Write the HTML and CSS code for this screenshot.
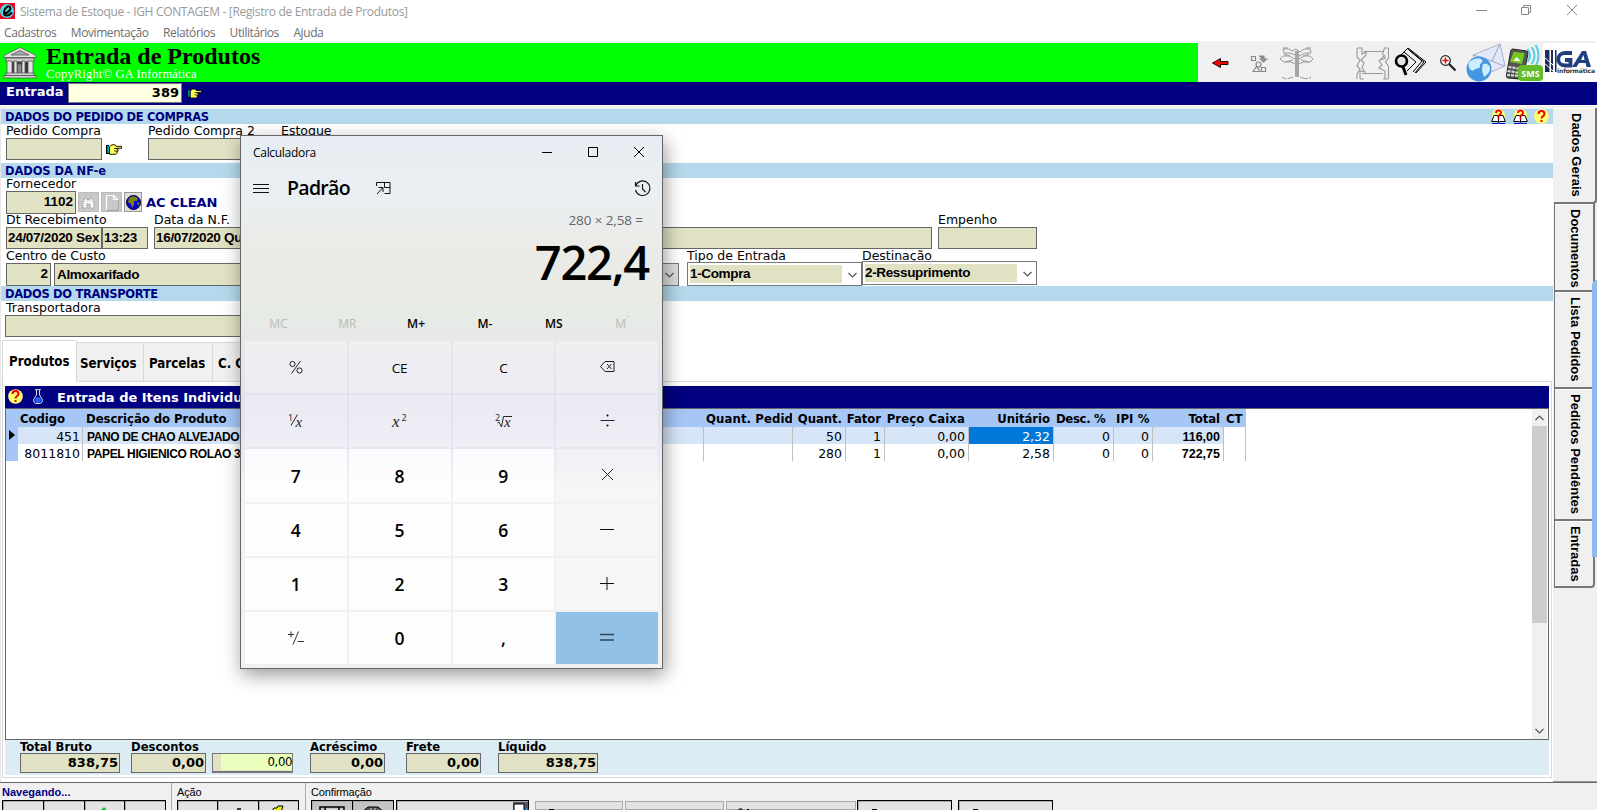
FILE: index.html
```html
<!DOCTYPE html>
<html lang="pt-BR">
<head>
<meta charset="utf-8">
<title>Sistema de Estoque</title>
<link rel="stylesheet" href="styles.css">
</head>
<body>
<svg class="defs" width="0" height="0">
  <symbol id="hand" viewBox="0 0 16 11"><path d="M0 1h3v9H0z"/><path d="M1.500 2h1.200v7H1.500z" fill="#0ff"/><path d="M3.500 2.500L6 .8h3l1 1.500h5.500v2H11v1h1v2h-1v2l-1 1H3.500z" fill="#ff5" stroke="#000" stroke-width=".9"/><path d="M8 4.500h3M8 7h3" stroke="#000" stroke-width=".8"/></symbol>
  <symbol id="book" viewBox="0 0 15 15"><circle cx="7.500" cy="6.500" r="6.500" fill="#ffff70"/><path d="M.700 12.500L3 6.500h3l1.500 1 1.500-1h3l2.300 6H9l-1.500 1-1.500-1z" fill="#fff" stroke="#000"/><path d="M7.500 7v6" stroke="#000"/><path d="M1 14h5.500l1 .5 1-.5H14v1H1z" fill="#00c"/><path d="M5 4c0-3.500 5-3.500 5 0 0 1.800-2.500 1.800-2.500 3.500M7.500 8.500v1.800" fill="none" stroke="#f00" stroke-width="1.900"/></symbol>
  <symbol id="help" viewBox="0 0 15 15"><circle cx="7.500" cy="7.500" r="7.300" fill="#ffff70"/><path d="M4.500 5c0-4 6-4 6 0 0 2-3 2-3 4.500M7.500 11v2" fill="none" stroke="#e00" stroke-width="2"/></symbol>
  <symbol id="chev" viewBox="0 0 9 6"><path d="M.5 1l4 4 4-4" fill="none" stroke="#555" stroke-width="1.200"/></symbol>
</svg>

<header class="titlebar">
  <svg class="appicon" width="15" height="16" viewBox="0 0 15 16"><path d="M0 0h15v16H0z" fill="#f00020"/><circle cx="7" cy="8" r="7" fill="#48d8e0"/><path d="M3 10.500c5 0 8.500-4 7-6.500C8.500 2 4 5 4 9.500c0 4 4.500 4 8 0" fill="none" stroke="#000" stroke-width="2"/></svg>
  <span class="apptitle">Sistema de Estoque - IGH CONTAGEM - [Registro de Entrada de Produtos]</span>
  <svg class="winctl" width="110" height="14" viewBox="0 0 110 14" fill="none" stroke="#888"><path d="M1 7.500h11M46.500 4.500h7v7h-7zM48.500 4V2.500h7v7H54M92 2l10 10M102 2L92 12"/></svg>
</header>
<nav class="menu"><span>Cadastros</span><span>Movimentação</span><span>Relatórios</span><span>Utilitários</span><span>Ajuda</span></nav>

<div class="banner">
  <div class="green">
    <svg width="34" height="33" viewBox="0 0 34 33" stroke="#555" stroke-width=".8"><path d="M1 9.500L17 1.500l16 8v2H1z" fill="#e4e4e4"/><path d="M8 9l9-4.500L26 9z" fill="#aaa"/><path d="M3 12h28v4H3z" fill="#ccc"/><path d="M6 16h22v12H6z" fill="#333"/><path d="M4 15h5v13H4zM11 15h3v13h-3zM19 15h3v13h-3zM25 15h5v13h-5z" fill="#e4e4e4"/><path d="M14.500 18h4v10h-4z" fill="#888"/><path d="M3 27h28v2.500H3zM1 29.500h32V32H1z" fill="#d4d4d4"/></svg>
    <div class="heading"><b>Entrada de Produtos</b><span>CopyRight© GA Informática</span></div>
  </div>
  <svg class="tools" width="399" height="39" viewBox="0 0 399 39" fill="none">
    <path d="M14.500 20l8-4.500v3h7.500v3h-7.500v3z" fill="#f00" stroke="#000" stroke-width=".9"/>
    <g stroke="#888" stroke-width="1.200"><path d="M53.500 13.500h4v4h-4zM63.500 24.500h4v4h-4zM55 28.500l3.500-5 3.500 5z"/><circle cx="60.500" cy="21.500" r="2.500"/><path d="M61 13h5v5M62.500 16l3 3 3-3z" fill="#888"/></g>
    <path d="M97 8h4v26h-4z" fill="#a4a4a4"/><g stroke="#999" stroke-width="1"><path d="M97 12l-5-2h-6l-1-4h6l3 2 4-2 4 3 4-3h6l1 4h-6l-6 3M97 16l-6-3h-6l-3 3 4 3h7l4 2M101 16l5-3h6l3 3-3 3h-7l-4 2M86 11l6 2M87 19l8-2M111 11l-6 2M111 19l-8-2M85 5h5M108 5h5"/><path d="M84 34c2 2 6 2 8 1M95 34l-3 1M105 35c3 1 6 1 8-1M102 34l3 1" stroke-dasharray="5 1"/></g>
    <g stroke="#999" stroke-width="1.100"><path d="M159 5h5v6l4-2v3l-5 5 3 3-2 5 3 4-5-1v8M159 5v9l3 3-3 6 3 3-3 5v5M166 8.500h19M190.500 5v10l-3 4 3 4v13M190.500 5h-4l-2 6 3 4-5 2M187 12l-6 6 3 4-3 3 6 3v8M164 30.500h21M162 36h4M185 36h5"/></g>
    <g stroke="#000" stroke-width="1"><path d="M202 13l8-8 18 14-10 11M206 9l12 10-9 9M211 7l13 11-9 11M210 6l16 13-9 11" /><circle cx="203.500" cy="18" r="5.500" fill="#e4e4e4" stroke-width="2.600"/><path d="M205 24l3 8" stroke-width="3"/></g>
    <circle cx="247.500" cy="17.500" r="4.800" fill="#fff" stroke="#222" stroke-width="1.200"/><path d="M244.500 17.500h6M247.500 14.500v6" stroke="#e00" stroke-width="1.500"/><path d="M251 21l6.500 6.500" stroke="#222" stroke-width="2.300"/>
    <path d="M275 12l27-11 5 22-21 9z" fill="#e3e8f8" stroke="#aab0d0"/><path d="M275 12l19 6 8-17M294 18l12 5" stroke="#9ca4c8"/>
    <circle cx="281" cy="26" r="12.500" fill="#4596e0"/><path d="M271 19c5-4 11-5 13-2s-3 3-2 6-6 2-7 5c-4-1-5-5-4-9zM285 21c5-1 7 2 7 5s-3 6-6 8c-1-4-3-6-1-13z" fill="#cdeeff"/>
    <g transform="translate(-9.500 0)"><path d="M324 6l14 2q2 0 1.500 3l-5 23q-.5 2-3 2l-12-1q-2 0-1.500-3l4-23q.5-3 2-3z" fill="#555" stroke="#222"/><path d="M325 9l11 1-2.500 11-12-2z" fill="#75c820"/><path d="M325 18l3-4 4 4z" fill="#fff"/><path d="M320 24l13 2M319 28l13 2M318.500 32l13 1" stroke="#ddd" stroke-width="2" stroke-dasharray="3 1"/>
    <path d="M339 6c3 4 3 9 0 13M343 4c4 5 4 12 0 17M347 2c4 6 4 15 0 21" stroke="#58cfe0" stroke-width="2"/>
    <rect x="329.500" y="22" width="25" height="16" rx="4" fill="#63bd2b"/><text x="342" y="33.500" text-anchor="middle" class="sms">SMS</text></g>
    <g transform="translate(-10 0)"><path d="M355 0h54v39h-54z" fill="#fff"/><path d="M357 7h4.500v22H357zM363 7h2v22h-2zM367 7h1.500v22H367z" fill="#1d2d5c"/><path d="M356 14l9 8M356 20l9 8" stroke="#fff"/>
    <path d="M384 10h-7c-9 0-9 12.500 0 12.500h5.500V17H377" stroke="#213f7e" stroke-width="3.800"/><path d="M384 24l10-16h4l5 16h-4.500l-1-4H391l-2.500 4zM393 17h3.500l-1-5z" fill="#213f7e" fill-rule="evenodd"/><text x="369" y="30" class="inf" textLength="38">informática</text></g>
  </svg>
</div>
<div class="entry"><b>Entrada</b><span class="num">389</span><svg width="15" height="11"><use href="#hand"/></svg></div>

<div class="main">
<main class="form">
  <div class="bar"><span>DADOS DO PEDIDO DE COMPRAS</span><i><svg width="15" height="15"><use href="#book"/></svg><svg width="15" height="15"><use href="#book"/></svg><svg width="15" height="15"><use href="#help"/></svg></i></div>
  <div class="row r1 labels"><span>Pedido Compra</span><span></span><span>Pedido Compra 2</span><span>Estoque</span></div>
  <div class="row r1"><span class="f"></span><svg class="hand" width="16" height="11"><use href="#hand"/></svg><span class="f"></span><span class="f"></span></div>
  <div class="bar b2"><span class="nf">DADOS DA NF-e</span></div>
  <div class="row labels h13"><span>Fornecedor</span></div>
  <div class="row r2"><span class="f right">1102</span>
    <span class="ib"><svg width="13" height="12" viewBox="0 0 13 12"><path d="M1 12V7l2-5h2v2h3V2h2l2 5v5H8V8H5v4z" fill="#f4f4f4" stroke="#888" stroke-dasharray="1 1"/></svg></span>
    <span class="ib"><svg width="12" height="15" viewBox="0 0 12 15"><path d="M.5.500h7l4 4v10H.500zM7.500.500v4h4" fill="none" stroke="#fff" stroke-width="1.200"/><path d="M1 15h11V5" fill="none" stroke="#888"/></svg></span>
    <span class="ib on"><svg width="15" height="15" viewBox="0 0 15 15"><circle cx="7.500" cy="7.500" r="7" fill="#0000e0" stroke="#003"/><path d="M3 3l4-2 5 2-1 3H8v4l-2 3-1-4-3-2zM11 7l3 1-2 3z" fill="#808000"/></svg></span>
    <b class="sup">AC CLEAN</b></div>
  <div class="row r3 labels"><span>Dt Recebimento</span><span></span><span>Data da N.F.</span><span>Empenho</span></div>
  <div class="row r3"><span class="f tight">24/07/2020 Sex</span><span class="f tight">13:23</span><span class="f tight">16/07/2020 Qui</span><span class="f"></span></div>
  <div class="row r4 labels"><span class="ccusto">Centro de Custo</span><span></span><span></span><span></span><span>Tipo de Entrada</span><span>Destinação</span></div>
  <div class="row r4"><span class="f right">2</span><span class="f mid">Almoxarifado</span><span class="f cap"></span><span class="dd"><svg width="9" height="6"><use href="#chev"/></svg></span><span class="combo"><b>1-Compra</b><svg width="9" height="6"><use href="#chev"/></svg></span><span class="combo up"><b>2-Ressuprimento</b><svg width="9" height="6"><use href="#chev"/></svg></span></div>
  <div class="bar b3"><span>DADOS DO TRANSPORTE</span></div>
  <div class="row labels"><span>Transportadora</span></div>
  <div class="row r5"><span class="f"></span></div>

  <div class="tabs"><b class="sel">Produtos</b><b>Serviços</b><b>Parcelas</b><b class="cc">C. Custo</b></div>
  <section class="panel">
    <div class="gridtitle"><svg width="15" height="15"><use href="#help"/></svg><svg class="flask" width="10" height="15" viewBox="0 0 10 15"><path d="M2 .700h6M3.500 1v5L.800 10v3l2 1.500h4.400l2-1.500v-3L6.500 6V1" fill="none" stroke="#ddd"/><circle cx="5" cy="11" r="3" fill="#2060ff"/></svg><b>Entrada de Itens Individuais</b></div>
    <div class="gridbox">
      <div class="table">
        <div class="tr th"><span></span><span>Codigo</span><span>Descrição do Produto</span><span>Quant. Pedid</span><span>Quant.</span><span>Fator</span><span>Preço Caixa</span><span>Unitário</span><span>Desc. %</span><span>IPI %</span><span>Total</span><span>CT</span></div>
        <div class="tr cur"><span class="ind"><svg width="6" height="10"><path d="M0 0l6 5-6 5z"/></svg></span><span>451</span><span class="ds">PANO DE CHAO ALVEJADO</span><span></span><span>50</span><span>1</span><span>0,00</span><span class="hit">2,32</span><span>0</span><span>0</span><b>116,00</b><span></span></div>
        <div class="tr"><span class="ind"></span><span>8011810</span><span class="ds">PAPEL HIGIENICO ROLAO 300M</span><span></span><span>280</span><span>1</span><span>0,00</span><span>2,58</span><span>0</span><span>0</span><b>722,75</b><span></span></div>
      </div>
      <div class="scroll"><svg class="flip" width="9" height="6"><use href="#chev"/></svg><div class="thumb"></div><svg width="9" height="6"><use href="#chev"/></svg></div>
    </div>
    <div class="totals">
      <div class="t100"><b>Total Bruto</b><span class="f">838,75</span></div>
      <div class="t75"><b>Descontos</b><span class="f">0,00</span></div>
      <div class="disc"><span>0,00</span></div>
      <div class="t75"><b>Acréscimo</b><span class="f">0,00</span></div>
      <div class="t75"><b>Frete</b><span class="f">0,00</span></div>
      <div class="t100"><b>Líquido</b><span class="f">838,75</span></div>
    </div>
  </section>
</main>
<aside class="side">
  <div class="s1">Dados Gerais</div><div class="s2">Documentos</div><div class="s3">Lista Pedidos</div><div class="s4">Pedidos Pendêntes</div><div class="s5">Entradas</div>
  <div class="strip"></div>
</aside>
</div>

<footer class="foot">
  <div class="grp g1"><b>Navegando...</b><p class="btns"><i></i><i></i><i><svg width="8" height="4"><path d="M1 4l3-3 2 2v1z" fill="#0c2"/></svg></i><i></i></p></div>
  <div class="grp g2"><span>Ação</span><p class="btns"><i></i><i><svg width="6" height="3"><path d="M2 3h4" stroke="#000" stroke-width="1.500"/></svg></i><i><svg width="16" height="6"><path d="M1 6l3-4h3l1-2h5l-2 6z" fill="#ee0" stroke="#000"/></svg></i></p></div>
  <div class="grp g3"><span>Confirmação</span><p class="btns dark"><i><svg width="26" height="6"><path d="M1 6V1h24v5M6 1v5M20 1v5" fill="none" stroke="#000" stroke-width="1.500"/><path d="M8 3h11v3H8z" fill="#ddd"/></svg></i><i><svg width="22" height="6"><path d="M0 6l6-5h10l6 5z" fill="#555" stroke="#000"/><path d="M9 2v4M13 2v4" stroke="#ccc"/></svg></i></p></div>
  <p class="btns b4"><i><svg width="15" height="9"><path d="M0 0h15v9H0z" fill="#556"/><path d="M1 2h10v7H1z" fill="#fff" stroke="#000"/><path d="M13 6h1v3h-1z" fill="#39f"/></svg></i></p>
  <p class="plain p1"><i></i></p><p class="plain p2"></p><p class="plain p3"><svg width="14" height="3"><path d="M1 3V1h3v2M8 3l2-2 2 2" fill="none" stroke="#000"/></svg></p>
  <p class="btns b5"><i><svg width="6" height="2"><path d="M0 0h5v1.500H0z"/></svg></i></p><p class="btns b6"><i><svg width="6" height="2"><path d="M0 0h5v1.500H0z"/></svg></i></p>
</footer>

<section class="calc">
  <div class="ctitle"><span>Calculadora</span><svg width="104" height="12" viewBox="0 0 104 12" fill="none" stroke="#000"><path d="M1 6.500h10M47.500 1.500h9v9h-9zM93 1l10 10M103 1L93 11"/></svg></div>
  <div class="chead">
    <svg width="16" height="11" viewBox="0 0 16 11"><path d="M0 1.500h16M0 5.500h16M0 9.500h16" stroke="#111"/></svg>
    <b>Padrão</b>
    <svg width="15" height="13" viewBox="0 0 15 13" fill="none" stroke="#111"><path d="M.500 4V.500h13.500v11H8.500M8.500.500v5H14M1 12l5.500-6M2.500 5.500H7V10"/></svg>
    <svg class="hist" width="17" height="17" viewBox="0 0 17 17" fill="none" stroke="#111" stroke-width="1.100"><path d="M1.500 2v4h4M1.800 5.500A7.300 7.300 0 1 1 1.500 10M8.500 4v5l3 3"/></svg>
  </div>
  <div class="expr">280 × 2,58 =</div>
  <div class="result">722,4</div>
  <div class="mem"><span class="off">MC</span><span class="off">MR</span><span>M+</span><span>M-</span><span>MS</span><span class="off">M<sup>ˇ</sup></span></div>
  <div class="keys">
    <span class="fn"><svg width="14" height="14" viewBox="0 0 14 14" fill="none" stroke="#222"><circle cx="3.500" cy="4" r="2.600"/><circle cx="10.500" cy="10.500" r="2.600"/><path d="M11.500 1l-9 12.500"/></svg></span><span class="fn dn">CE</span><span class="fn dn">C</span><span class="fn"><svg width="15" height="11" viewBox="0 0 15 11" fill="none" stroke="#222"><path d="M5 .500h9v10H5l-4.500-5zM7 3l4.500 5M11.500 3L7 8"/></svg></span>
    <span class="fn"><svg width="15" height="14" viewBox="0 0 15 14"><text x="0" y="6.500" class="rt">1</text><path d="M9.500.500L3 11.500" stroke="#222"/><text x="7.500" y="12.500" class="rx">x</text></svg></span><span class="fn"><svg width="15" height="14" viewBox="0 0 15 14"><text x="0" y="12.500" class="rx big">x</text><text x="9.500" y="6.500" class="rt">2</text></svg></span><span class="fn"><svg width="17" height="14" viewBox="0 0 17 14"><path d="M2.500 9l1.500-1 2.500 5L8.500 2.500H17" fill="none" stroke="#222"/><text x="0" y="6.500" class="rt">2</text><text x="9" y="12.500" class="rx">x</text></svg></span><span class="fn"><svg width="15" height="13" viewBox="0 0 15 13"><path d="M.500 6.500h14" stroke="#222"/><circle cx="7.500" cy="1.500" r="1"/><circle cx="7.500" cy="11.500" r="1"/></svg></span>
    <span>7</span><span>8</span><span>9</span><span class="op"><svg width="13" height="13" viewBox="0 0 13 13"><path d="M1 1l11 11M12 1L1 12" stroke="#222"/></svg></span>
    <span>4</span><span>5</span><span>6</span><span class="op"><svg width="14" height="3"><path d="M0 1.500h14" stroke="#111"/></svg></span>
    <span>1</span><span>2</span><span>3</span><span class="op"><svg width="14" height="15"><path d="M0 7.500h14M7 1v13" stroke="#111"/></svg></span>
    <span><svg width="16" height="14" viewBox="0 0 16 14" fill="none" stroke="#333"><path d="M0 3.500h6M3 .500v6M10.500.500L5 13.500M9.500 10.500H16"/></svg></span><span>0</span><span>,</span><span class="eq"><svg width="14" height="9"><path d="M0 1.500h14M0 7h14" stroke="#345" stroke-width="1.600"/></svg></span>
  </div>
</section>
</body>
</html>
```

FILE: styles.css
```css
* { box-sizing: border-box; }
body { margin: 0; width: 1597px; height: 810px; overflow: hidden; position: relative; background: #f0f0f0; color: #000; font: 13px/14px "DejaVu Sans", sans-serif; }
svg { display: block; flex: none; overflow: visible; }
.defs { position: absolute; }
p { margin: 0; }
span, b { white-space: nowrap; }

.titlebar { height: 23px; background: #fff; display: flex; align-items: flex-start; font: 12px/23px "Open Sans", sans-serif; color: #999; }
.appicon { margin-top: 3px; }
.apptitle { margin-left: 5px; letter-spacing: -.32px; }
.winctl { margin: 3px 12px 0 auto; }
.menu { height: 18px; background: #fff; display: flex; gap: 14.500px; padding-left: 4px; font: 12px/19px "Open Sans", sans-serif; letter-spacing: -.42px; color: #6d6d6d; }

.banner { height: 41px; padding-top: 2px; display: flex; }
.green { width: 1198px; background: #0f0; display: flex; padding: 3px 0 0 3px; }
.heading { margin-left: 9px; display: flex; flex-direction: column; font-family: "Liberation Serif", serif; }
.heading b { font-size: 24px; line-height: 21px; letter-spacing: 0; }
.heading span { color: #fff; font-size: 12.500px; line-height: 14px; letter-spacing: .18px; }
.tools { overflow: hidden; }
.sms { font: bold 9px "Open Sans", sans-serif; fill: #fff; }
.inf { font: bold 6px "DejaVu Sans", sans-serif; fill: #333; }

.entry { height: 23px; background: #000080; display: flex; align-items: flex-start; }
.entry b { color: #fff; font-size: 13px; line-height: 20px; margin-left: 6px; width: 62px; }
.num { width: 114px; height: 20px; margin-top: 1px; border: 1px solid #777; background: #ffffe1; text-align: right; font-weight: bold; line-height: 17px; padding-right: 2px; }
.entry svg { margin: 6px 0 0 5px; }

.main { height: 678px; display: flex; border-top: 1px solid #fff; border-bottom: 1px solid #666; box-shadow: inset 0 -1px #999; }
.form { width: 1553px; background: #fff; border-left: 1px solid #e8e8e8; border-top: 3px solid #f0f0f0; display: flex; flex-direction: column; height: 676px; }
.bar { height: 15px; flex: none; background: #b5d9ec; color: #000080; font-weight: bold; font-size: 11.500px; line-height: 16px; letter-spacing: -.33px; padding-left: 4px; display: flex; }
.nf { letter-spacing: -.1px; }
.bar i { margin-left: auto; display: flex; gap: 6.500px; padding-right: 4px; }
.b2 { margin-top: 3px; } .b3 { margin-top: 1px; }
.row { display: grid; height: 22px; flex: none; padding-left: 5px; }
.labels { height: 14px; font-size: 12.500px; line-height: 13px; }
.ccusto { letter-spacing: -.1px; }
.h13 { height: 13px; line-height: 12px; }
.f { border: 1px solid #666; background: #e1e1c4; font: bold 13.500px/20px "Liberation Sans", sans-serif; letter-spacing: -.35px; padding: 0 2px; overflow: hidden; }
.right { text-align: right; padding-right: 2px; letter-spacing: 0; line-height: 19px; }
.r1 { grid-template-columns: 96px 46px 133px 107px; }
.r1 > .f:nth-child(3) { width: 126px; }
.hand { margin: 6px 0 0 4px; }
.r2 { grid-template-columns: 70px 21px 21px 18px auto; column-gap: 2px; justify-content: start; }
.r2 .f { margin-right: 1px; width: 70px; }
.ib { background: #c8c8c8; margin: 1px 0; height: 20px; display: flex; align-items: center; justify-content: center; border: 1px solid #bbb; }
.ib.on { background: #ddd; border-color: #999; }
.sup { color: #000080; font-size: 13px; line-height: 23px; margin-left: 2px; letter-spacing: -.05px; }
.r3 { grid-template-columns: 96px 52px 784px 99px; }
.r3 > .f:nth-child(2) { width: 46px; }
.r3 > .f:nth-child(3) { width: 778px; }
.tight { padding: 0 1px; font-size: 13.500px; line-height: 19px; letter-spacing: -.3px; }
.r4 { grid-template-columns: 48px 300px 306px 27px 175px 175px; }
.r4 > .f:first-child { width: 45px; }
.r4 > .mid { width: 290px; line-height: 21px; }
.dd { width: 19px; border: 1px solid #777; background: #ddd; display: flex; align-items: center; justify-content: center; }
.combo { border: 1px solid #777; background: #fff; height: 24px; margin-top: -1px; padding: 2px 10px 2px 2px; display: flex; justify-content: space-between; align-items: center; }
.combo.up { margin-top: -2px; width: 175px; }
.combo b { width: 152px; height: 18px; background: #e1e1c4; font: bold 13.500px/17px "Liberation Sans", sans-serif; letter-spacing: -.35px; }
.combo svg { margin: 2px -6px 0 0; }
.r5 { padding-left: 4px; grid-template-columns: 500px; }

.tabs { height: 42px; flex: none; margin-top: 3px; padding-left: 1px; display: flex; align-items: flex-end; box-shadow: inset 0 -1px #d9d9d9; font: bold 13.200px/14px "DejaVu Sans Condensed", "DejaVu Sans", sans-serif; }
.tabs b { height: 40px; background: #f0f0f0; border: 1px solid #d9d9d9; border-left: 0; width: 69px; padding: 14px 0 0 5px; }
.tabs b:nth-child(2) { width: 67px; padding-left: 3px; }
.tabs .sel { height: 42px; width: 75px; background: #fff; border-left: 1px solid #d9d9d9; border-bottom: 0; padding: 14px 0 0 6px; }
.tabs .cc { width: 90px; }
.panel { width: 1550px; margin-left: 1px; border: 1px solid #d9d9d9; border-top: 0; padding: 4px 2px 2px; height: 396px; background: #fff; display: flex; flex-direction: column; }
.gridtitle { height: 22px; flex: none; background: #000080; color: #fff; display: flex; padding: 3px 0 0 3px; font-size: 13px; line-height: 17px; }
.flask { margin: 0 14px 0 10px; width: 10px; }
.gridbox { height: 332px; flex: none; border: 1px solid #666; display: flex; justify-content: space-between; }
.table { width: 1240px; }
.tr { display: grid; grid-template-columns: 12px 65px 621px 89px 53px 39px 84px 85px 60px 39px 71px 22px; height: 17px; line-height: 20px; font-size: 12.500px; text-align: right; }
.tr > * { border-right: 1px solid #c0c0c0; padding-right: 3px; overflow: hidden; }
.tr > :first-child { border: 0; background: #a6c6f5; padding: 3px 0 0 3px; }
.tr > :nth-child(3) { text-align: left; padding-left: 3px; }
.tr > :nth-child(2) { padding-right: 2px; }
.tr > b { font: bold 12.500px/20px "Liberation Sans", sans-serif; }
.tr > .ds { font: bold 12px/20px "Liberation Sans", sans-serif; letter-spacing: -.36px; padding-left: 4px; }
.th { height: 18px; background: #a6c6f5; font: bold 13px/20px "DejaVu Sans Condensed", "DejaVu Sans", sans-serif; letter-spacing: -.05px; }
.th > * { border-right-color: transparent; }
.th > :nth-child(2), .th > :nth-child(4), .th > :nth-child(9), .th > :nth-child(10), .th > :nth-child(12) { text-align: left; padding: 0 0 0 2px; }
.th > :nth-child(9) { letter-spacing: -.35px; }
.th > :nth-child(4), .th > :nth-child(7), .th > :nth-child(10) { letter-spacing: .1px; }
.cur { background: linear-gradient(90deg, #d6e5f8 1218px, #fff 1218px); }
.cur .hit { background: #0078d7; color: #fff; }
.scroll { width: 15px; margin-right: 1px; background: #f0f0f0; display: flex; flex-direction: column; align-items: center; padding: 6px 0 5px; }
.flip { transform: scaleY(-1); }
.thumb { width: 15px; height: 197px; background: #cdcdcd; margin: 5px 0 auto; }
.totals { height: 35px; flex: none; background: #dcecf5; display: flex; padding: 0 0 0 15px; font: bold 12.900px/13px "DejaVu Sans Condensed", "DejaVu Sans", sans-serif; }
.totals > div { display: flex; flex-direction: column; }
.totals .f { height: 20px; font: bold 13px/18px "DejaVu Sans", sans-serif; letter-spacing: 0; text-align: right; padding-right: 1px; }
.totals b { height: 13px; overflow: visible; line-height: 14px; }
.t100 { width: 100px; } .t75 { width: 75px; margin-left: 21px; }
.totals > .t75:nth-child(2) { margin-left: 11px; } .totals > .t75:nth-child(4) { margin-left: 17px; } .totals > .t100:last-child { margin-left: 17px; }
.totals .disc { width: 81px; height: 20px; margin: 13px 0 0 6px; border: 1px solid #777; border-bottom-width: 2px; background: #e1e1c4; padding-left: 8px; }
.disc span { background: #eaffbe; text-align: right; font: 13px/16px "DejaVu Sans Condensed", sans-serif; letter-spacing: -.4px; }

.side { width: 44px; position: relative; display: flex; flex-direction: column; align-items: flex-start; padding: 2px 0 0 1px; font: bold 13px/14px "Liberation Sans", sans-serif; letter-spacing: 0; }
.side > div:not(.strip) { writing-mode: vertical-rl; width: 41px; padding: 5px 0 0; line-height: 36px; border: 1px solid #777; border-width: 0 2px 2px 1px; border-radius: 0 0 4px 0; box-shadow: inset 0 1px #fff; white-space: nowrap; }
.side .s1 { width: 43px !important; height: 96px; border-left: 0 !important; line-height: 37px !important; letter-spacing: 0; }
.s2 { height: 88px; } .s3 { height: 97px; } .s4 { height: 132px; } .s5 { height: 67px; }
.side .strip { position: absolute; left: 39px; top: 174px; width: 5px; height: 277px; background: #8fb9ec; border-radius: 5px 0 0 0; }

.foot { height: 27px; display: flex; padding: 0 0 0 2px; font: 11px/16px "Liberation Sans", sans-serif; overflow: hidden; }
.grp { display: flex; flex-direction: column; padding-top: 1px; }
.grp b { color: #000080; }
.grp > span { letter-spacing: -.15px; }
.btns { display: flex; height: 12px; border: 1px solid #000; border-width: 1px 0 0 1px; background: #e2e2e2; }
.btns i { flex: 1; border-right: 1px solid #000; box-shadow: inset 1px 1px #aaa; padding-top: 5px; display: flex; justify-content: center; }
.dark i { background: #c4c4c4; }
.g1 { width: 164px; margin-right: 5px; } .g2 { width: 128px; padding-left: 5px; border-left: 1px solid #aaa; margin-right: 6px; } .g3 { width: 89px; padding-left: 5px; border-left: 1px solid #aaa; }
.b4 { width: 133px; margin: 17px 6px 0 2px; }
.b4 i { justify-content: flex-end; padding-top: 1px; }
.plain { height: 9px; margin-top: 18px; border: 1px solid #aaa; background: #e2e2e2; margin-right: 2px; }
.p1 { width: 88px; padding: 7px 0 0 13px; } .p1 i { display: block; width: 5px; height: 2px; background: #000; }
.p2 { width: 99px; } .p3 { width: 130px; margin-right: 1px; padding: 6px 0 0 11px; }
.b5, .b6 { width: 95px; margin: 17px 6px 0 0; }
.b5 i, .b6 i { justify-content: flex-start; padding: 8px 0 0 14px; }

.calc { position: absolute; left: 240px; top: 135px; width: 423px; height: 534px; border: 1px solid #666; background: linear-gradient(180deg, #e8edf3 0, #e9eff2 12%, #ebebe7 20%, #e7ebe5 34%, #e6e6ec 41%, #e0e1ee 52%, #e8e9f2 60%, #f1f2f2 66%, #f1f1f1 100%); box-shadow: 2px 6px 18px rgba(0,0,0,.4); padding: 0 4px; font-family: "Open Sans", sans-serif; display: flex; flex-direction: column; }
.ctitle { display: flex; justify-content: space-between; height: 34px; padding: 10px 13px 0 8px; font-size: 12px; line-height: 14px; letter-spacing: -.3px; }
.chead { display: flex; align-items: center; height: 36px; padding: 0 7px 0 8px; }
.chead b { font-size: 19.500px; font-weight: 600; line-height: 34px; letter-spacing: -.7px; margin: 0 26.500px 0 18px; }
.hist { margin-left: auto; }
.expr { height: 22px; text-align: right; font-size: 13.500px; line-height: 28px; letter-spacing: -.1px; color: #666; padding-right: 15px; }
.result { height: 78px; text-align: right; font-size: 47px; font-weight: 600; line-height: 68px; letter-spacing: -1.200px; padding-right: 9px; }
.mem { display: grid; grid-template-columns: repeat(6, 1fr); height: 35px; text-align: center; font-size: 12px; font-weight: 600; line-height: 35px; margin: 0 1px 0 -1px; }
.mem .off { color: #b8bbb8; font-weight: 400; }
.mem sup { line-height: 0; font-size: 9px; }
.keys { height: 323px; display: grid; grid-template-columns: repeat(4, 1fr); grid-template-rows: repeat(6, 1fr); gap: 2px; }
.keys > span { background: rgba(255,255,255,.82); display: flex; align-items: center; justify-content: center; font-size: 17.500px; font-weight: 600; padding-top: 1px; }
.keys > .fn, .keys > .op { background: rgba(255,255,255,.35); font-size: 13.500px; font-weight: 400; padding: 0 0 1px; }
.keys > .dn { padding: 2px 0 0; letter-spacing: -.2px; }
.keys > .eq { background: #91c1e7; padding: 0; }
.rt { font: 9px "Open Sans", sans-serif; fill: #222; }
.rx { font: italic 15px "Liberation Serif", serif; fill: #222; }
.big { font-size: 17px; }
```
